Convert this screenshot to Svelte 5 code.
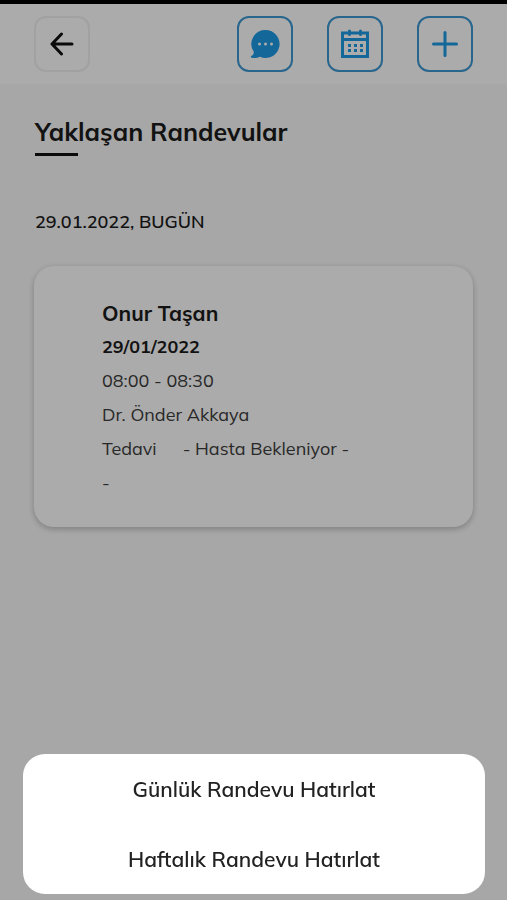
<script>
  let menuOpen = true;

  const appointments = [
    {
      patient: 'Onur Taşan',
      date: '29/01/2022',
      time: '08:00 - 08:30',
      doctor: 'Dr. Önder Akkaya',
      type: 'Tedavi',
      status: '- Hasta Bekleniyor -',
      note: '-'
    }
  ];

  const reminders = ['Günlük Randevu Hatırlat', 'Haftalık Randevu Hatırlat'];

  function closeMenu() {
    menuOpen = false;
  }
</script>

<div class="screen">
  <div class="status-bar"></div>

  <header>
    <button class="icon-button back" aria-label="Geri">
      <svg width="24" height="24" viewBox="0 0 24 24">
        <path d="M22 12H2M11.5 2L2 12l9.5 10" />
      </svg>
    </button>

    <div class="actions">
      <button class="icon-button" aria-label="Mesajlar">
        <svg width="30" height="30" viewBox="0 0 30 30">
          <path class="solid" d="M15.5 1a14 14 0 1 1-5.6 26.8C7.7 29 4.5 29.5 1.6 28.8C.6 28.5.6 27.2 1.5 26.8C3 26.1 3.7 25 3.9 23A14 14 0 0 1 15.5 1z" />
          <circle class="dot" cx="9.5" cy="15" r="1.5" />
          <circle class="dot" cx="15.5" cy="15" r="1.5" />
          <circle class="dot" cx="21.5" cy="15" r="1.5" />
        </svg>
      </button>

      <!-- Calendar -->
      <button class="icon-button" aria-label="Takvim">
        <svg width="30" height="30" viewBox="0 0 30 30">
          <path class="frame" d="M2.5 4h25v23.500h-25zM2.5 10.500h25" />
          <path class="ring" d="M9.5 2v3.500M20.5 2v3.500" />
          <path class="solid" d="M8 15h3v3H8zM14 15h3v3h-3zM20 15h3v3h-3zM8 20h3v3H8zM14 20h3v3h-3zM20 20h3v3h-3z" />
        </svg>
      </button>

      <button class="icon-button" aria-label="Randevu ekle">
        <svg width="28" height="28" viewBox="0 0 28 28">
          <path d="M14 2.500v23M2.500 14h23" />
        </svg>
      </button>
    </div>
  </header>

  <main>
    <h1>Yaklaşan Randevular</h1>
    <h2>29.01.2022, BUGÜN</h2>

    {#each appointments as item}
      <article class="card">
        <h3>{item.patient}</h3>
        <p class="date">{item.date}</p>
        <p>{item.time}</p>
        <p>{item.doctor}</p>
        <p class="type"><span>{item.type}</span><span>{item.status}</span></p>
        <p>{item.note}</p>
      </article>
    {/each}
  </main>
</div>

{#if menuOpen}
  <div class="overlay">
    <div class="sheet">
      {#each reminders as reminder}
        <button on:click={closeMenu}>{reminder}</button>
      {/each}
    </div>
  </div>
{/if}

<style>
  :global(body) {
    margin: 0;
    background: #fafafa;
  }

  .screen,
  .overlay {
    font-family: 'Mulish', 'Open Sans', 'Noto Sans', sans-serif;
    color: #1c1c1c;
  }

  .screen {
    min-height: 100vh;
  }

  .status-bar {
    height: 4px;
    background: #000;
  }

  header {
    display: flex;
    justify-content: space-between;
    padding: 12px 34px;
    background: #fff;
  }

  .actions {
    display: flex;
    gap: 34px;
  }

  .icon-button {
    display: flex;
    align-items: center;
    justify-content: center;
    width: 56px;
    height: 56px;
    padding: 0;
    border: 2px solid #3c98d2;
    border-radius: 12px;
    background: none;
    color: #1f9ae4;
  }

  .icon-button.back {
    border-color: #f0f0f0;
    color: #111;
  }

  svg path {
    fill: none;
    stroke: currentColor;
    stroke-width: 3;
    stroke-linecap: round;
    stroke-linejoin: round;
  }

  svg .solid {
    fill: currentColor;
    stroke: none;
  }

  svg .dot {
    fill: #fff;
  }

  svg .frame {
    stroke-linecap: butt;
    stroke-linejoin: miter;
  }

  main {
    padding: 30px 34px;
  }

  h1,
  h2,
  h3,
  p {
    margin: 0;
  }

  h1,
  h2 {
    padding-left: 1px;
  }

  h1 {
    font-size: 25px;
    font-weight: 700;
    line-height: 36px;
  }

  h1::after {
    content: '';
    display: block;
    width: 43px;
    height: 3px;
    margin-top: 3px;
    background: #111;
  }

  h2 {
    margin: 52px 0 30px;
    font-size: 18px;
    font-weight: 600;
    line-height: 28px;
  }

  .card {
    padding: 30px 20px 27px 68px;
    border-radius: 20px;
    background: #fff;
    box-shadow: 0 2px 6px rgba(0, 0, 0, 0.25);
    font-size: 18px;
    line-height: 34px;
  }

  h3 {
    font-size: 21px;
    font-weight: 700;
  }

  .date {
    font-weight: 700;
  }

  .card p:not(.date) {
    color: #3c3c3c;
  }

  .type {
    display: flex;
    gap: 26px;
  }

  .overlay {
    position: fixed;
    inset: 0;
    display: flex;
    align-items: flex-end;
    padding: 0 22px 6px 23px;
    background: rgba(0, 0, 0, 0.33);
  }

  .sheet {
    display: flex;
    flex: 1;
    flex-direction: column;
    overflow: hidden;
    border-radius: 22px;
    background: #fff;
  }

  .sheet button {
    height: 70px;
    padding: 0;
    border: none;
    background: none;
    color: #222;
    font: inherit;
    font-size: 21px;
    font-weight: 600;
  }
</style>
